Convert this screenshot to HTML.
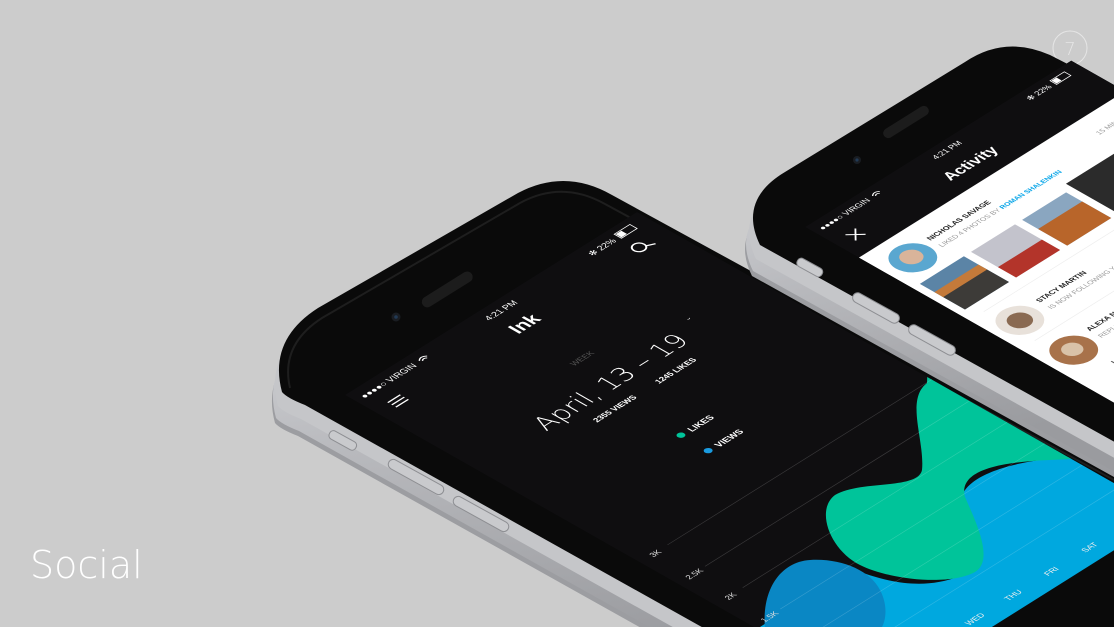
<!DOCTYPE html>
<html><head><meta charset="utf-8"><style>
html,body{margin:0;padding:0;background:#cccccc;overflow:hidden;width:1114px;height:627px}
svg{display:block}
text{font-family:"Liberation Sans",sans-serif}
</style></head><body>
<svg width="1114" height="627" viewBox="0 0 1114 627" xmlns="http://www.w3.org/2000/svg">
<defs>
<linearGradient id="silver" x1="0" y1="0" x2="0.3" y2="1">
<stop offset="0" stop-color="#e4e5e8"/><stop offset="0.5" stop-color="#b9babe"/><stop offset="1" stop-color="#9a9b9f"/></linearGradient>
<clipPath id="scr1"><polygon points="345,395 637,212 1170,515 879,698"/></clipPath>
<clipPath id="loc"><rect x="0" y="0" width="375" height="667"/></clipPath>
<clipPath id="page"><rect width="1114" height="627"/></clipPath>
<path id="f1" d="M282,392 Q268,340 318,308 L518,193 Q565,168 612,195 L1140,484 L1140,640 L725,640 L305,405 Q287,398 282,392 Z"/>
<path id="f2" d="M760,245 Q738,200 785,172 L965,62 Q1005,35 1050,55 L1140,101 L1140,456 Z"/>
</defs>
<g clip-path="url(#page)">
<rect width="1114" height="627" fill="#cccccc"/>
<text x="30" y="578" font-size="38" fill="#fff" font-weight="200" style="font-family:'DejaVu Sans',sans-serif">Social</text>
<circle cx="1070" cy="48" r="17" fill="none" stroke="#e6e6e6" stroke-width="1"/>
<text x="1070" y="55" font-size="18" fill="#e6e6e6" text-anchor="middle" font-weight="200" style="font-family:'DejaVu Sans',sans-serif">7</text>

<use href="#f1" fill="#9c9da1" transform="translate(-7,31)"/>
<use href="#f1" fill="url(#silver)" transform="translate(-6,26)"/>
<use href="#f1" fill="#c5c6c9" transform="translate(-4,14)"/>
<use href="#f1" fill="#0a0a0a"/>
<path d="M290,388 Q280,345 322,318 L520,203 Q562,180 605,204 L1114,480" fill="none" stroke="#1e1e1e" stroke-width="2"/>
<g fill="#c9cacd" stroke="#8d8e92" stroke-width="1">
<rect x="328" y="436" width="30" height="9" rx="4" transform="rotate(29 343 440)"/>
<rect x="385" y="472" width="62" height="10" rx="5" transform="rotate(29 416 477)"/>
<rect x="450" y="509" width="62" height="10" rx="5" transform="rotate(29 481 514)"/>
</g>
<rect x="418" y="284" width="58" height="11" rx="5.5" fill="#1c1c1c" transform="rotate(-32 447 289)"/>
<circle cx="396" cy="317" r="4.5" fill="#1a1d22"/><circle cx="396" cy="317" r="1.8" fill="#223a55"/>
<polygon points="345,395 637,212 1170,515 879,698" fill="#0f0e10"/>
<g clip-path="url(#scr1)">
<path d="M1114,455 C1040,455 960,468 960,505 C960,540 990,562 960,576 C920,592 880,580 850,568 L760,627 L1114,627 Z" fill="#00a8df"/>
<path d="M927,383 C905,400 925,440 922,470 C918,490 860,480 835,495 C815,510 830,550 860,565 C890,580 950,586 975,572 C995,560 975,520 965,497 C958,470 1000,462 1050,460 L1114,457 L1114,300 L930,300 Z" fill="#00c49a"/>
<path d="M765,627 C762,590 780,562 810,560 C840,558 870,570 880,590 C888,605 886,620 882,627 Z" fill="#0a87c4"/>
</g>
<g transform="matrix(0.780,-0.488,0.8,0.455,345,395)" fill="#fff">
<text x="8" y="17" font-size="10">●●●●○ VIRGIN</text>
<path d="M82,13 q5,-5 10,0 M84,15 q3,-3 6,0" stroke="#fff" stroke-width="1.3" fill="none"/>
<text x="186" y="17" font-size="10" text-anchor="middle">4:21 PM</text>
<text x="300" y="17" font-size="10">✻ 22%</text>
<rect x="337" y="8" width="20" height="9" fill="none" stroke="#fff" stroke-width="1"/><rect x="338" y="9" width="7" height="7"/>
<g stroke="#fff" stroke-width="1.6"><line x1="18" y1="36" x2="34" y2="36"/><line x1="18" y1="41" x2="34" y2="41"/><line x1="18" y1="46" x2="34" y2="46"/></g>
<text x="186" y="50" font-size="21" font-weight="bold" text-anchor="middle">Ink</text>
<circle cx="338" cy="38" r="6.5" fill="none" stroke="#fff" stroke-width="1.8"/><line x1="344" y1="41" x2="352" y2="45" stroke="#fff" stroke-width="1.8"/>
<text x="184" y="120" font-size="9" fill="#555" text-anchor="middle">WEEK</text>
<text x="176" y="170" font-size="28" font-weight="200" text-anchor="middle" style="font-family:'DejaVu Sans',sans-serif">April, 13 – 19</text>
<text x="290" y="152" font-size="10">ˇ</text>
<text x="150" y="194" font-size="9" font-weight="bold" text-anchor="middle">2355 VIEWS</text>
<text x="228" y="194" font-size="9" font-weight="bold" text-anchor="middle">1245 LIKES</text>
<circle cx="162" cy="262" r="4" fill="#00c49a"/><text x="172" y="266" font-size="10" font-weight="bold">LIKES</text>
<circle cx="162" cy="296" r="4" fill="#1a9be0"/><text x="172" y="300" font-size="10" font-weight="bold">VIEWS</text>
<g stroke="#fff" stroke-opacity="0.18" stroke-width="0.8">
<line x1="36" y1="368" x2="375" y2="368"/><line x1="36" y1="415" x2="375" y2="415"/><line x1="36" y1="462" x2="375" y2="462"/><line x1="36" y1="509" x2="375" y2="509"/><line x1="36" y1="556" x2="375" y2="556"/><line x1="36" y1="603" x2="375" y2="603"/></g>
<g font-size="9" fill="#ddd"><text x="14" y="372">3K</text><text x="12" y="419">2.5K</text><text x="14" y="466">2K</text><text x="12" y="513">1.5K</text></g>
<g font-size="9" fill="#eee" text-anchor="middle"><text x="144" y="650">WED</text><text x="193" y="650">THU</text><text x="242" y="650">FRI</text><text x="291" y="650">SAT</text></g>
</g>

<use href="#f2" fill="#9c9da1" transform="translate(-8,31)"/>
<use href="#f2" fill="url(#silver)" transform="translate(-7,26)"/>
<use href="#f2" fill="#c5c6c9" transform="translate(-4,14)"/>
<use href="#f2" fill="#0a0a0a"/>
<g fill="#c9cacd" stroke="#8d8e92" stroke-width="1">
<rect x="796" y="263" width="28" height="9" rx="4" transform="rotate(29 810 267)"/>
<rect x="850" y="303" width="52" height="10" rx="5" transform="rotate(29 876 308)"/>
<rect x="906" y="335" width="52" height="10" rx="5" transform="rotate(29 932 340)"/>
</g>
<rect x="880" y="117" width="52" height="10" rx="5" fill="#1c1c1c" transform="rotate(-32 906 122)"/>
<circle cx="857" cy="160" r="4" fill="#1a1d22"/><circle cx="857" cy="160" r="1.6" fill="#223a55"/>
<g transform="matrix(0.710,-0.444,0.728,0.414,805,227)">
<g clip-path="url(#loc)">
<rect x="0" y="0" width="375" height="667" fill="#0f0e10"/>
<rect x="0" y="74" width="375" height="593" fill="#fff"/>
<g fill="#fff">
<text x="8" y="17" font-size="10">●●●●○ VIRGIN</text>
<path d="M82,13 q5,-5 10,0 M84,15 q3,-3 6,0" stroke="#fff" stroke-width="1.3" fill="none"/>
<text x="186" y="17" font-size="10" text-anchor="middle">4:21 PM</text>
<text x="300" y="17" font-size="10">✻ 22%</text>
<rect x="337" y="8" width="20" height="9" fill="none" stroke="#fff" stroke-width="1"/><rect x="338" y="9" width="7" height="7"/>
<path d="M18,38 l14,14 M32,38 l-14,14" stroke="#fff" stroke-width="1.8"/>
<text x="186" y="52" font-size="19" font-weight="bold" text-anchor="middle">Activity</text>
</g>
<circle cx="36" cy="113" r="24" fill="#5aa7d0"/><circle cx="36" cy="111" r="12" fill="#d9b49a"/>
<text x="68" y="106" font-size="9" font-weight="bold" fill="#222">NICHOLAS SAVAGE</text>
<text x="68" y="122" font-size="8.5" fill="#999">LIKED 4 PHOTOS BY <tspan fill="#0aa6e8" font-weight="bold">ROMAN SHALENKIN</tspan></text>
<text x="306" y="106" font-size="8.5" fill="#999">15 MIN</text>
<rect x="10" y="148" width="62" height="62" fill="#5b84a6"/><rect x="10" y="178" width="62" height="32" fill="#3d3b38"/><rect x="10" y="168" width="62" height="12" fill="#c47a3a"/>
<rect x="82" y="148" width="62" height="62" fill="#c3c3cc"/><rect x="82" y="185" width="62" height="25" fill="#b3342a"/>
<rect x="154" y="148" width="62" height="62" fill="#8aa6c0"/><rect x="154" y="170" width="62" height="40" fill="#b8652a"/>
<rect x="226" y="138" width="70" height="72" fill="#2b2b2b"/>
<line x1="20" y1="226" x2="375" y2="226" stroke="#eee"/>
<circle cx="34" cy="262" r="24" fill="#e8e1da"/><circle cx="34" cy="262" r="13" fill="#8a6a52"/>
<text x="68" y="256" font-size="9" font-weight="bold" fill="#222">STACY MARTIN</text>
<text x="68" y="272" font-size="8.5" fill="#999">IS NOW FOLLOWING YOU</text>
<line x1="20" y1="296" x2="375" y2="296" stroke="#eee"/>
<circle cx="35" cy="335" r="24" fill="#a8724a"/><circle cx="35" cy="333" r="11" fill="#d9c2a8"/>
<text x="68" y="325" font-size="9" font-weight="bold" fill="#222">ALEXA NIKOLAEVA</text>
<text x="68" y="341" font-size="8.5" fill="#999">REPLIED TO YOUR COMMENT</text>
<text x="45" y="385" font-size="15" fill="#555">I really like this shot</text>
<text x="45" y="405" font-size="15" fill="#555">So nice!</text>
</g>
</g>
</g>
</svg>
</body></html>
